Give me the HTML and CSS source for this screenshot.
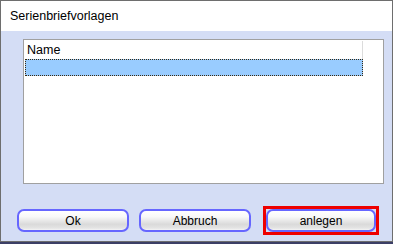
FILE: index.html
```html
<!doctype html>
<html>
<head>
<meta charset="utf-8">
<title>Serienbriefvorlagen</title>
<link rel="stylesheet" href="styles.css">
</head>
<body>
<div class="window">
	<div class="titlebar">Serienbriefvorlagen</div>
	<div class="content">
		<div class="list">
			<div class="list-head"><span class="col">Name</span></div>
			<div class="list-row selected"></div>
		</div>
		<div class="buttons">
			<button class="btn">Ok</button>
			<button class="btn">Abbruch</button>
			<div class="focus"><button class="btn">anlegen</button></div>
		</div>
	</div>
</div>
</body>
</html>
```

FILE: styles.css
```css
* {margin:0; padding:0; box-sizing:border-box;}

body {background:#3c3f66; font-family:"Liberation Sans", sans-serif; font-size:12px; color:#000;}

.window {width:393px; height:242px; border:1px solid #6e6e6e; display:flex; flex-direction:column; background:#d4ddf5;}

.titlebar {height:30px; background:#fff; padding-left:9px; line-height:31px; font-size:12.5px; color:#000;}

.content {flex:1; display:flex; flex-direction:column; padding:8px 8px 0 22px;}

.list {height:145px; background:#fff; border:1px solid #a0a0a0; padding:1px 20px 0 1px;}
.list-head {height:18px; border-right:1px solid #dcdcdc; padding-left:2px; line-height:18px; font-size:12.5px;}
.list-row {height:17px; border-right:1px solid #dcdcdc;}
.list-row.selected {background:#99ccff; border:1px dotted #3a2a10;}

.buttons {display:flex; align-items:flex-start; margin-top:22px; margin-left:-6px;}
.btn {display:block; width:112px; height:23px; margin-top:3px; margin-right:10px; border:2px solid #6666ff; border-radius:7px; background:linear-gradient(#ffffff 0%, #f8f8f8 30%, #dadada 70%, #e4e4e4 90%, #f4f4f4 100%); font-family:"Liberation Sans", sans-serif; font-size:12px; color:#000;}
.btn:nth-child(2) {margin-right:12px;}
.focus {border:3px solid #ee0000;}
.focus .btn {width:110px; margin:0;}
```
